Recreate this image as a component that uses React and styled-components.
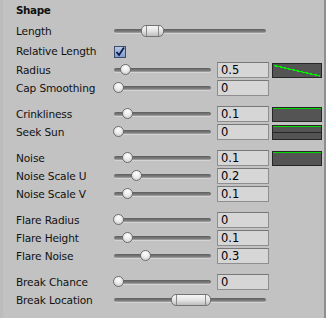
import React from 'react';
import styled, { createGlobalStyle } from 'styled-components';

const GlobalStyle = createGlobalStyle`
  html, body {
    margin: 0;
    padding: 0;
    background: #c2c2c2;
  }
`;

const Panel = styled.div`
  box-sizing: border-box;
  width: 326px;
  height: 318px;
  padding: 0 4px 0 13px;
  background: #c2c2c2;
  border-left: 3px solid #bcbcbc;
  border-right: 2px solid #8f8f8f;
  font-family: 'DejaVu Sans', Verdana, sans-serif;
  font-size: 10.6px;
  color: #111;
`;

const Header = styled.div`
  height: 20px;
  display: flex;
  align-items: center;
  font-weight: bold;
  font-size: 10.4px;
  letter-spacing: -0.4px;
  padding-bottom: 1px;
`;

const Group = styled.div`
  margin-top: ${(p) => p.$gap || 0}px;
`;

const Row = styled.div`
  display: flex;
  align-items: center;
  height: ${(p) => p.$h || 18}px;
`;

const Label = styled.div`
  width: 98px;
  flex-shrink: 0;
  white-space: nowrap;
  letter-spacing: -0.15px;
`;

const Track = styled.div`
  position: relative;
  width: ${(p) => p.$w}px;
  height: 4px;
  border-radius: 2px;
  background: linear-gradient(#5e5e5e, #7a7a7a 60%, #a8a8a8);
  box-shadow: 0 1px 0 #d4d4d4;
  flex-shrink: 0;
`;

const Thumb = styled.div`
  position: absolute;
  top: -4px;
  box-sizing: border-box;
  width: 11px;
  height: 11px;
  margin-left: -5px;
  border-radius: 50%;
  border: 1px solid #6e6e6e;
  background: radial-gradient(circle at 50% 30%, #ffffff 0%, #ececec 45%, #c4c4c4 100%);
`;

const RangeThumb = styled.div`
  position: absolute;
  top: -4px;
  box-sizing: border-box;
  height: 12px;
  border-radius: 5px;
  border: 1px solid #737373;
  background: linear-gradient(#f6f6f6, #e4e4e4 50%, #bdbdbd);

  &::before,
  &::after {
    content: '';
    position: absolute;
    top: 0;
    bottom: 0;
    width: 1px;
    background: #8a8a8a;
  }
  &::before {
    left: 4px;
  }
  &::after {
    right: 4px;
  }
`;

const Field = styled.div`
  box-sizing: border-box;
  width: 52px;
  height: 16px;
  margin-left: 6px;
  padding: 1px 0 0 3px;
  background: #d6d6d6;
  border: 1px solid #8e8e8e;
  border-top-color: #777;
  line-height: 13px;
  font-size: 11.5px;
  letter-spacing: 0;
  color: #000;
  flex-shrink: 0;
`;

const Curve = styled.svg`
  display: block;
  width: 50px;
  height: 15px;
  margin-left: 3px;
  flex-shrink: 0;
`;

const CheckBox = styled.div`
  box-sizing: border-box;
  width: 12px;
  height: 12px;
  border: 1px solid #3d4c6b;
  background: linear-gradient(#b7c8e2, #7f9ccc);
  display: flex;
  align-items: center;
  justify-content: center;
  margin-top: 1px;
`;

function Slider({ width, pos }) {
  return (
    <Track $w={width}>
      <Thumb style={{ left: pos }} />
    </Track>
  );
}

function RangeSlider({ width, from, to }) {
  return (
    <Track $w={width}>
      <RangeThumb style={{ left: from, width: to - from }} />
    </Track>
  );
}

function CurveBox({ kind }) {
  return (
    <Curve viewBox="0 0 50 15" shapeRendering="crispEdges">
      <rect x="0.5" y="0.5" width="49" height="14" fill="#545454" stroke="#262626" />
      {kind === 'down' && (
        <line x1="2" y1="2.5" x2="48" y2="13" stroke="#00ee00" strokeWidth="1.4" />
      )}
      {kind !== 'down' && <line x1="1" y1="1.5" x2="49" y2="1.5" stroke="#00d800" />}
      {kind === 'split' && <line x1="1" y1="7.5" x2="49" y2="7.5" stroke="#262626" />}
    </Curve>
  );
}

function FieldRow({ label, pos, value, curve }) {
  return (
    <Row>
      <Label>{label}</Label>
      <Slider width={97} pos={pos} />
      <Field>{value}</Field>
      {curve && <CurveBox kind={curve} />}
    </Row>
  );
}

export default function App() {
  return (
    <>
      <GlobalStyle />
      <Panel>
        <Header>Shape</Header>
        <Row $h={20}>
          <Label>Length</Label>
          <RangeSlider width={152} from={27} to={50} />
        </Row>
        <Row $h={20}>
          <Label>Relative Length</Label>
          <CheckBox>
            <svg width="10" height="10" viewBox="0 0 10 10">
              <path d="M1.5 5 L4 8 L9 0.5" fill="none" stroke="#0c1c4f" strokeWidth="1.8" />
            </svg>
          </CheckBox>
        </Row>
        <FieldRow label="Radius" pos={11} value="0.5" curve="down" />
        <FieldRow label="Cap Smoothing" pos={4} value="0" />

        <Group $gap={8}>
          <FieldRow label="Crinkliness" pos={13} value="0.1" curve="flat" />
          <FieldRow label="Seek Sun" pos={4} value="0" curve="split" />
        </Group>

        <Group $gap={8}>
          <FieldRow label="Noise" pos={13} value="0.1" curve="flat" />
          <FieldRow label="Noise Scale U" pos={22} value="0.2" />
          <FieldRow label="Noise Scale V" pos={13} value="0.1" />
        </Group>

        <Group $gap={8}>
          <FieldRow label="Flare Radius" pos={4} value="0" />
          <FieldRow label="Flare Height" pos={13} value="0.1" />
          <FieldRow label="Flare Noise" pos={31} value="0.3" />
        </Group>

        <Group $gap={8}>
          <FieldRow label="Break Chance" pos={4} value="0" />
          <Row>
            <Label>Break Location</Label>
            <RangeSlider width={152} from={57} to={97} />
          </Row>
        </Group>
      </Panel>
    </>
  );
}
